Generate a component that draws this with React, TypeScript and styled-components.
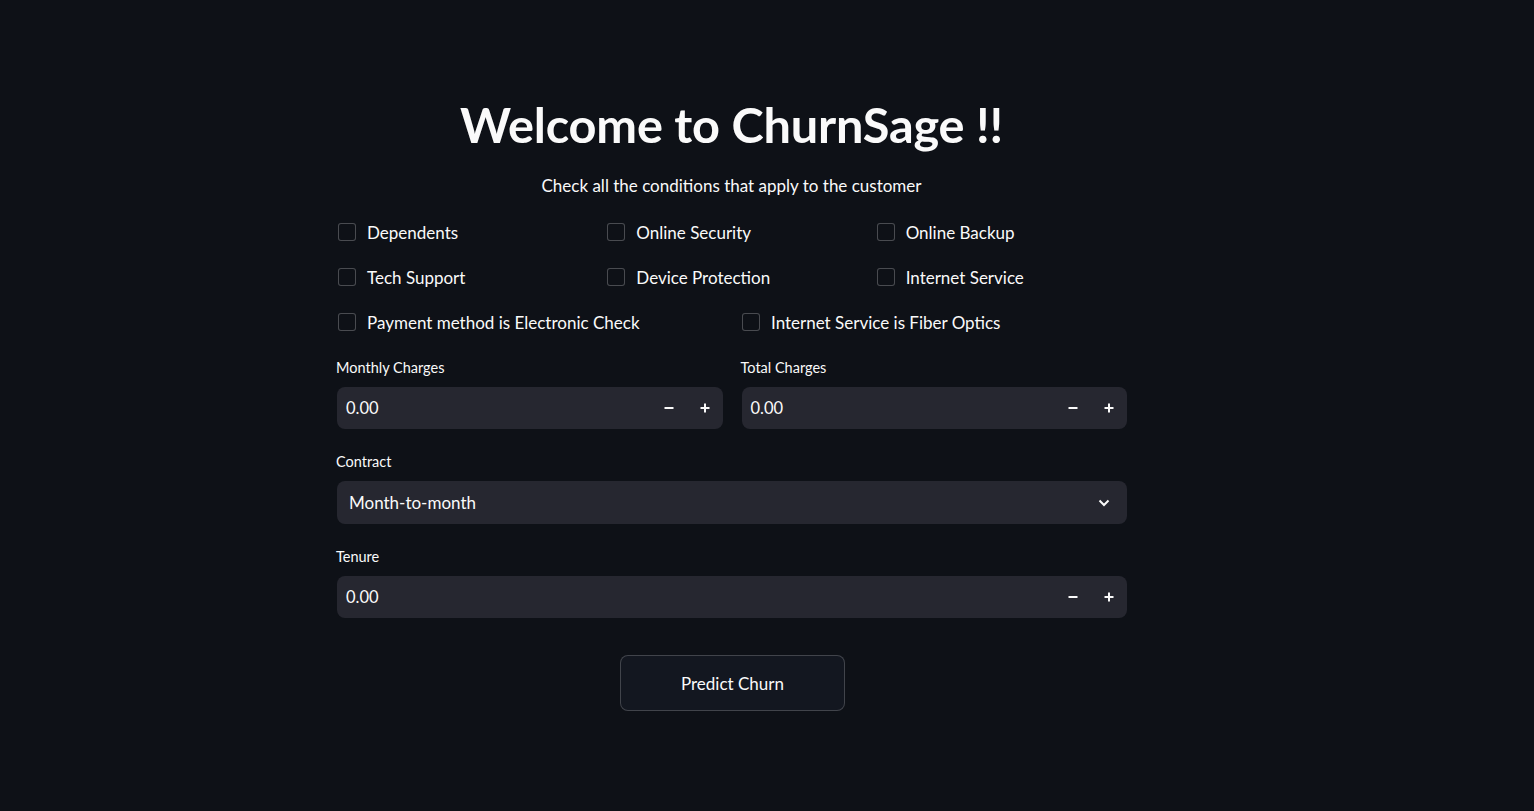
import React from "react";
import styled, { createGlobalStyle } from "styled-components";

const Global = createGlobalStyle`
  html, body { margin: 0; padding: 0; background: #0e1117; }
  * { box-sizing: border-box; }
`;

const Page = styled.div`
  min-height: 100vh;
  background: #0e1117;
  color: #fafafa;
  font-family: Lato, "Noto Sans", sans-serif;
`;

const Main = styled.main`
  width: 791px;
  margin-left: 336px;
  padding-top: 97px;
  display: flex;
  flex-direction: column;
`;

const Title = styled.h1`
  margin: 0;
  text-align: center;
  font-size: 48.7px;
  line-height: 55px;
  font-weight: 700;
  letter-spacing: -0.2px;
`;

const Subtitle = styled.p`
  margin: 22px 0 0;
  text-align: center;
  font-size: 17px;
  line-height: 24px;
`;

const CheckGrid = styled.div<{ $cols: number }>`
  display: grid;
  grid-template-columns: repeat(${(p) => p.$cols}, 1fr);
  column-gap: 17px;
  grid-auto-rows: 45px;
`;

const CheckArea = styled.div`
  margin-top: 12px;
  display: flex;
  flex-direction: column;
`;

const CheckLabel = styled.label`
  display: flex;
  align-items: center;
  gap: 11px;
  padding-left: 2px;
  font-size: 17px;
  cursor: pointer;
`;

const Box = styled.span`
  width: 18px;
  height: 18px;
  border: 1px solid rgba(250, 250, 250, 0.25);
  border-radius: 3px;
  background: #0e1117;
  flex: none;
  transform: translateY(-1px);
`;

const FieldRow = styled.div`
  display: grid;
  grid-template-columns: 1fr 1fr;
  column-gap: 18px;
  margin-top: 13px;
`;

const Field = styled.div<{ $mt?: number }>`
  display: flex;
  flex-direction: column;
  margin-top: ${(p) => p.$mt ?? 0}px;
`;

const FieldLabel = styled.div`
  font-size: 14.5px;
  line-height: 20px;
  height: 20px;
  margin-bottom: 9px;
`;

const InputBox = styled.div<{ $h?: number }>`
  height: ${(p) => p.$h ?? 42}px;
  background: #262730;
  border-radius: 8px;
  display: flex;
  align-items: center;
  margin-left: 1px;
`;

const Value = styled.div`
  flex: 1;
  padding-left: 9px;
  font-size: 16.5px;
`;

const StepButton = styled.button`
  width: 36px;
  height: 100%;
  border: none;
  background: transparent;
  color: #fafafa;
  display: flex;
  align-items: center;
  justify-content: center;
  padding: 0;
  cursor: pointer;
`;

const SelectText = styled.div`
  flex: 1;
  padding-left: 12px;
  font-size: 17px;
`;

const Chevron = styled.div`
  width: 46px;
  display: flex;
  align-items: center;
  justify-content: center;
`;

const ButtonWrap = styled.div`
  display: flex;
  justify-content: center;
  margin-top: 37px;
  padding-left: 2px;
`;

const PredictButton = styled.button`
  width: 225px;
  height: 56px;
  background: #131720;
  border: 1px solid rgba(250, 250, 250, 0.2);
  border-radius: 8px;
  color: #fafafa;
  font-family: Lato, "Noto Sans", sans-serif;
  font-size: 17px;
  cursor: pointer;
`;

const Minus = () => (
  <svg width="10" height="10" viewBox="0 0 10 10">
    <line x1="0.5" y1="5" x2="9.5" y2="5" stroke="#fafafa" strokeWidth="2" />
  </svg>
);
const Plus = () => (
  <svg width="10" height="10" viewBox="0 0 10 10">
    <line x1="0.5" y1="5" x2="9.5" y2="5" stroke="#fafafa" strokeWidth="2" />
    <line x1="5" y1="0.5" x2="5" y2="9.5" stroke="#fafafa" strokeWidth="2" />
  </svg>
);

const NumberInput = () => (
  <InputBox>
    <Value>0.00</Value>
    <StepButton aria-label="decrement"><Minus /></StepButton>
    <StepButton aria-label="increment"><Plus /></StepButton>
  </InputBox>
);

const Check = ({ label }: { label: string }) => (
  <CheckLabel>
    <Box />
    {label}
  </CheckLabel>
);

export default function App() {
  return (
    <Page>
      <Global />
      <Main>
        <Title>Welcome to ChurnSage !!</Title>
        <Subtitle>Check all the conditions that apply to the customer</Subtitle>
        <CheckArea>
          <CheckGrid $cols={3}>
            <Check label="Dependents" />
            <Check label="Online Security" />
            <Check label="Online Backup" />
            <Check label="Tech Support" />
            <Check label="Device Protection" />
            <Check label="Internet Service" />
          </CheckGrid>
          <CheckGrid $cols={2}>
            <Check label="Payment method is Electronic Check" />
            <Check label="Internet Service is Fiber Optics" />
          </CheckGrid>
        </CheckArea>
        <FieldRow>
          <Field>
            <FieldLabel>Monthly Charges</FieldLabel>
            <NumberInput />
          </Field>
          <Field>
            <FieldLabel>Total Charges</FieldLabel>
            <NumberInput />
          </Field>
        </FieldRow>
        <Field $mt={23}>
          <FieldLabel>Contract</FieldLabel>
          <InputBox $h={43}>
            <SelectText>Month-to-month</SelectText>
            <Chevron>
              <svg width="12" height="8" viewBox="0 0 12 8">
                <polyline points="1.5,1.5 6,6 10.5,1.5" fill="none" stroke="#fafafa" strokeWidth="2" />
              </svg>
            </Chevron>
          </InputBox>
        </Field>
        <Field $mt={23}>
          <FieldLabel>Tenure</FieldLabel>
          <NumberInput />
        </Field>
        <ButtonWrap>
          <PredictButton>Predict Churn</PredictButton>
        </ButtonWrap>
      </Main>
    </Page>
  );
}
